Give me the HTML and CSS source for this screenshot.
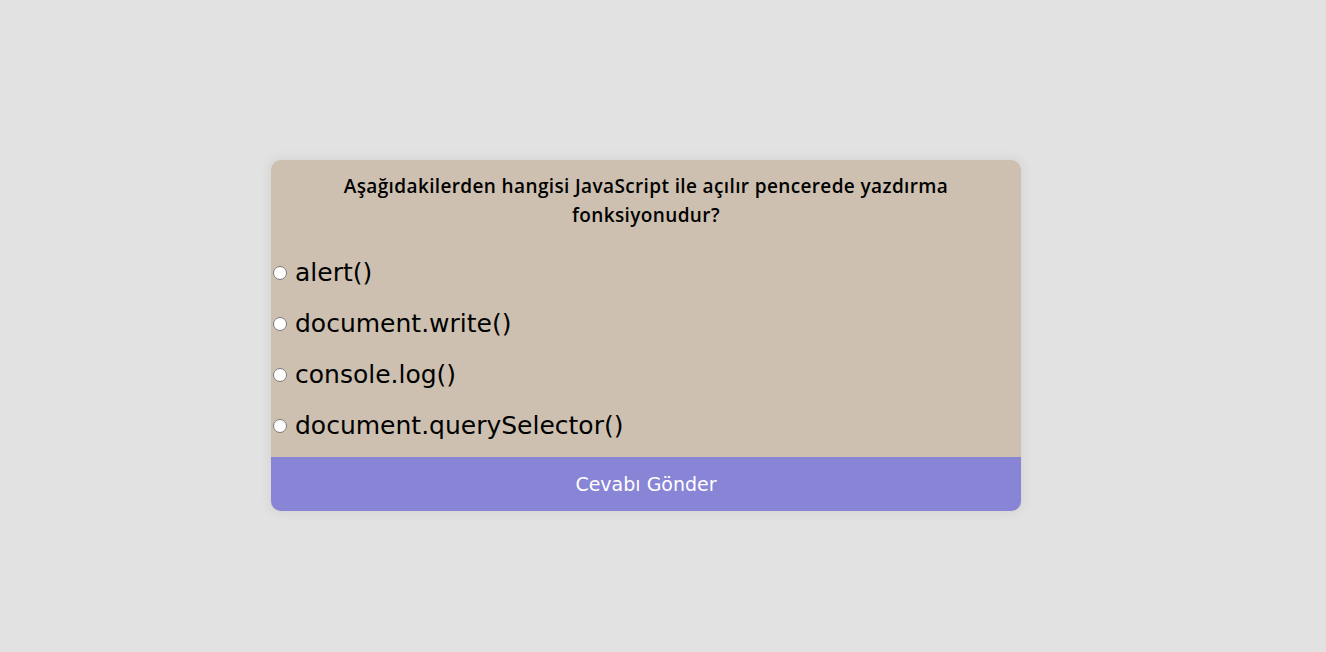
FILE: index.html
```
<!DOCTYPE html>
<html lang="tr">
<head>
<meta charset="utf-8">
<title>Quiz</title>
<link rel="stylesheet" href="styles.css">
</head>
<body>
<div class="quiz">
  <div class="quiz-body">
    <h2 class="question">Aşağıdakilerden hangisi JavaScript ile açılır pencerede yazdırma fonksiyonudur?</h2>
    <ul class="answers">
      <li class="answer"><input type="radio" name="answer" id="a"><label for="a">alert()</label></li>
      <li class="answer"><input type="radio" name="answer" id="b"><label for="b">document.write()</label></li>
      <li class="answer"><input type="radio" name="answer" id="c"><label for="c">console.log()</label></li>
      <li class="answer"><input type="radio" name="answer" id="d"><label for="d">document.querySelector()</label></li>
    </ul>
  </div>
  <button class="submit">Cevabı Gönder</button>
</div>
</body>
</html>
```
FILE: styles.css
```
* { box-sizing: border-box; }
body {
  margin: 0;
  min-height: 100vh;
  background: #e2e2e2;
  font-family: "DejaVu Sans", "Noto Sans", sans-serif;
  display: flex;
  align-items: center;
  justify-content: center;
  padding: 19px 34px 0 0;
}
.quiz {
  width: 750px;
  background: #cdc0b0;
  border-radius: 10px;
  box-shadow: 0 0 10px 2px rgba(100, 100, 100, 0.1);
  overflow: hidden;
}
.quiz-body {
  padding: 12px 0 0 0;
}
.question {
  margin: 0 auto;
  width: 640px;
  text-align: center;
  font-family: "Open Sans", "Noto Sans", sans-serif;
  font-size: 19px;
  letter-spacing: 0.37px;
  font-weight: 600;
  line-height: 29px;
  color: #000;
}
.answers {
  list-style: none;
  margin: 0;
  padding: 24px 0 14px 0;
  display: flex;
  flex-direction: column;
  gap: 15px;
}
.answer {
  height: 36px;
  display: flex;
  align-items: center;
  font-size: 25px;
  color: #000;
}
.answer input {
  margin: 1px 8px 0 2px;
  width: 14px;
  height: 14px;
}
.submit {
  display: block;
  width: 100%;
  height: 54px;
  border: none;
  background: #8884d6;
  color: #fff;
  font-family: inherit;
  font-size: 19px;
  cursor: pointer;
}
```
